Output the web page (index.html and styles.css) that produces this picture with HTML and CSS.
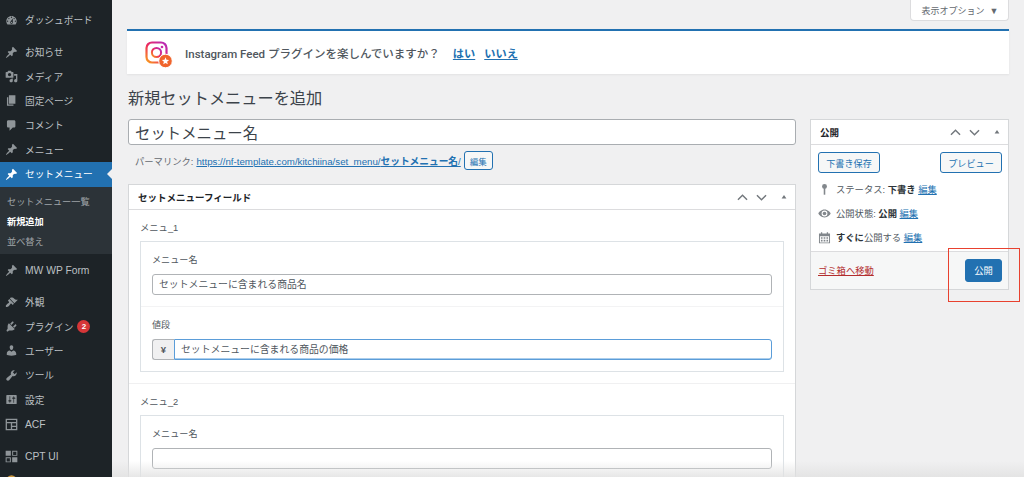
FILE: index.html
```html
<!DOCTYPE html>
<html lang="ja">
<head>
  <meta charset="UTF-8" />
  <meta name="viewport" content="width=device-width, initial-scale=1.0"/>
  <title>新規セットメニューを追加</title>
  <link rel="stylesheet" href="styles.css">
</head>
<body>
  <svg class="sprites" aria-hidden="true">
    <symbol id="i-dash" viewBox="0 0 20 20"><path d="M3.76 16h12.48c1.1-1.37 1.76-3.11 1.76-5 0-4.42-3.58-8-8-8s-8 3.58-8 8c0 1.89.66 3.63 1.76 5zM10 4c.55 0 1 .45 1 1s-.45 1-1 1-1-.45-1-1 .45-1 1-1zM6 6c.55 0 1 .45 1 1s-.45 1-1 1-1-.45-1-1 .45-1 1-1zm8 0c.55 0 1 .45 1 1s-.45 1-1 1-1-.45-1-1 .45-1 1-1zm-5.37 5.55L12 7v6c0 1.1-.9 2-2 2s-2-.9-2-2c0-.57.24-1.08.63-1.45zM4 10c.55 0 1 .45 1 1s-.45 1-1 1-1-.45-1-1 .45-1 1-1zm12 0c.55 0 1 .45 1 1s-.45 1-1 1-1-.45-1-1 .45-1 1-1zm-5 3c0-.55-.45-1-1-1s-1 .45-1 1 .45 1 1 1 1-.45 1-1z"/></symbol>
    <symbol id="i-pin" viewBox="0 0 20 20"><path d="M10.44 3.02l1.82-1.82 6.36 6.35-1.83 1.82c-1.05-.68-2.48-.57-3.41.36l-.75.75c-.92.93-1.04 2.35-.35 3.41l-1.83 1.82-2.41-2.41-2.8 2.79c-.42.42-3.38 2.71-3.8 2.29s1.86-3.39 2.28-3.81l2.79-2.79L4.1 9.36l1.83-1.82c1.05.69 2.48.57 3.4-.36l.75-.75c.93-.92 1.05-2.35.36-3.41z"/></symbol>
    <symbol id="i-media" viewBox="0 0 20 20"><path d="M13 11V4c0-.55-.45-1-1-1h-1.67L9 1H5L3.67 3H2c-.55 0-1 .45-1 1v7c0 .55.45 1 1 1h10c.55 0 1-.45 1-1zM7 4.5c1.38 0 2.5 1.12 2.5 2.5S8.38 9.5 7 9.5 4.5 8.38 4.5 7 5.62 4.5 7 4.5zM14 6h5v10.5c0 1.38-1.12 2.5-2.5 2.5S14 17.88 14 16.5s1.12-2.5 2.5-2.5c.17 0 .34.02.5.05V9h-3V6zm-4 8.05V13h2v3.5c0 1.38-1.12 2.5-2.5 2.5S7 17.88 7 16.5 8.12 14 9.5 14c.17 0 .34.02.5.05z"/></symbol>
    <symbol id="i-page" viewBox="0 0 20 20"><path d="M6 15V2h10v13H6zm-1 1h8v2H3V5h2v11z"/></symbol>
    <symbol id="i-comment" viewBox="0 0 20 20"><path d="M5 2h9c1.1 0 2 .9 2 2v7c0 1.1-.9 2-2 2h-2l-5 5v-5H5c-1.1 0-2-.9-2-2V4c0-1.1.9-2 2-2z"/></symbol>
    <symbol id="i-brush" viewBox="0 0 20 20"><path d="M14.48 11.06L7.41 3.99l1.5-1.5c.5-.56 2.3-.47 3.51.32 1.21.8 1.43 1.28 2.91 2.1 1.18.64 2.45 1.26 4.45.85zm-.71.71L6.7 4.7 4.93 6.47c-.39.39-.39 1.02 0 1.41l1.06 1.06c.39.39.39 1.03 0 1.42-.6.6-1.43 1.11-2.21 1.69-.35.26-.7.53-1.01.84C1.43 13.23.78 15.78 1.5 16.5c.73.72 3.27.07 4.61-1.27.31-.31.58-.66.84-1.01.58-.78 1.09-1.61 1.69-2.21.39-.39 1.02-.39 1.41 0l1.06 1.06c.39.39 1.02.39 1.41 0z"/></symbol>
    <symbol id="i-plugin" viewBox="0 0 20 20"><path d="M13.11 4.36L9.87 7.6 8 5.73l3.24-3.24c.35-.34 1.05-.2 1.56.32.52.51.66 1.21.31 1.55zm-8 1.77l.91-1.12 9.01 9.01-1.19.84c-.71.71-2.63 1.16-3.82 1.16H6.14L4.9 17.26c-.59.59-1.54.59-2.12 0-.59-.58-.59-1.53 0-2.12l1.24-1.24v-3.88c0-1.13.4-3.19 1.09-3.89zm7.26 3.97l3.24-3.24c.34-.35 1.04-.21 1.55.31.52.51.66 1.21.31 1.55l-3.24 3.25z"/></symbol>
    <symbol id="i-user" viewBox="0 0 20 20"><path d="M10 9.25c-2.27 0-2.73-3.44-2.73-3.44C7 4.02 7.82 2 9.97 2c2.16 0 2.98 2.02 2.71 3.81 0 0-.41 3.44-2.68 3.44zm0 2.57L12.72 10c2.39 0 4.52 2.33 4.52 4.53v2.49s-3.65 1.13-7.24 1.13c-3.65 0-7.24-1.13-7.24-1.13v-2.49c0-2.25 1.94-4.48 4.47-4.48z"/></symbol>
    <symbol id="i-tool" viewBox="0 0 20 20"><path d="M16.68 9.77c-1.34 1.34-3.3 1.67-4.95.99l-5.41 6.52c-.99.99-2.59.99-3.58 0s-.99-2.59 0-3.57l6.52-5.42c-.68-1.65-.35-3.61.99-4.95 1.28-1.28 3.12-1.62 4.72-1.06l-2.89 2.89 2.82 2.82 2.86-2.87c.53 1.58.18 3.39-1.08 4.65z"/></symbol>
    <symbol id="i-settings" viewBox="0 0 20 20"><path d="M18 16V4c0-.55-.45-1-1-1H3c-.55 0-1 .45-1 1v12c0 .55.45 1 1 1h14c.55 0 1-.45 1-1zM8 11h1c.55 0 1 .45 1 1s-.45 1-1 1H8v1.5c0 .28-.22.5-.5.5s-.5-.22-.5-.5V13H6c-.55 0-1-.45-1-1s.45-1 1-1h1V5.5c0-.28.22-.5.5-.5s.5.22.5.5V11zm5-2h-1c-.55 0-1-.45-1-1s.45-1 1-1h1V5.5c0-.28.22-.5.5-.5s.5.22.5.5V7h1c.55 0 1 .45 1 1s-.45 1-1 1h-1v5.5c0 .28-.22.5-.5.5s-.5-.22-.5-.5V9z"/></symbol>
    <symbol id="i-acf" viewBox="0 0 20 20"><path fill-rule="evenodd" d="M1 1h18v18H1zM3 3v3h14V3zM3 8v9h6V8zm8 0v4h6V8zm0 6v3h6v-3z"/></symbol>
    <symbol id="i-cpt" viewBox="0 0 20 20"><path fill-rule="evenodd" d="M1 1h8v8H1zM11 1h8v8h-8zM12.500 2.500v5h5v-5zM1 11h8v8H1zM2.500 12.500v5h5v-5zM11 11h8v8h-8z"/></symbol>
    <symbol id="i-up" viewBox="0 0 20 20"><path d="M3 13.5L10 6.5l7 7" fill="none" stroke="currentColor" stroke-width="2.2"/></symbol>
    <symbol id="i-down" viewBox="0 0 20 20"><path d="M3 6.5l7 7 7-7" fill="none" stroke="currentColor" stroke-width="2.2"/></symbol>
    <symbol id="i-tri" viewBox="0 0 20 20"><path d="M10 5l6 9H4z"/></symbol>
  </svg>

  <!-- サイドメニュー -->
  <nav class="sidebar">
    <a class="nav-item"><svg class="nav-icon"><use href="#i-dash"/></svg>ダッシュボード</a>
    <div class="nav-sep"></div>
    <a class="nav-item"><svg class="nav-icon"><use href="#i-pin"/></svg>お知らせ</a>
    <a class="nav-item"><svg class="nav-icon"><use href="#i-media"/></svg>メディア</a>
    <a class="nav-item"><svg class="nav-icon"><use href="#i-page"/></svg>固定ページ</a>
    <a class="nav-item"><svg class="nav-icon"><use href="#i-comment"/></svg>コメント</a>
    <a class="nav-item"><svg class="nav-icon"><use href="#i-pin"/></svg>メニュー</a>
    <a class="nav-item current"><svg class="nav-icon"><use href="#i-pin"/></svg>セットメニュー</a>
    <div class="submenu">
      <a>セットメニュー一覧</a>
      <a class="sub-current">新規追加</a>
      <a>並べ替え</a>
    </div>
    <a class="nav-item latin"><svg class="nav-icon"><use href="#i-pin"/></svg>MW WP Form</a>
    <div class="nav-sep"></div>
    <a class="nav-item"><svg class="nav-icon"><use href="#i-brush"/></svg>外観</a>
    <a class="nav-item"><svg class="nav-icon"><use href="#i-plugin"/></svg>プラグイン<span class="badge">2</span></a>
    <a class="nav-item"><svg class="nav-icon"><use href="#i-user"/></svg>ユーザー</a>
    <a class="nav-item"><svg class="nav-icon"><use href="#i-tool"/></svg>ツール</a>
    <a class="nav-item"><svg class="nav-icon"><use href="#i-settings"/></svg>設定</a>
    <a class="nav-item latin"><svg class="nav-icon"><use href="#i-acf"/></svg>ACF</a>
    <div class="nav-sep"></div>
    <a class="nav-item latin"><svg class="nav-icon"><use href="#i-cpt"/></svg>CPT UI</a>
    <a class="nav-item"><svg class="nav-icon plugin-dot" viewBox="0 0 20 20"><circle cx="10" cy="10" r="8"/></svg></a>
  </nav>

  <main class="content">
    <div class="screen-meta"><button class="screen-tab">表示オプション<span class="screen-arrow">▼</span></button></div>

    <div class="notice">
      <svg class="ig-logo" viewBox="0 0 28 28">
        <defs>
          <linearGradient id="ig" x1="0" y1="1" x2="1" y2="0">
            <stop offset="0" stop-color="#f9a11b"/>
            <stop offset="0.45" stop-color="#ee2a5c"/>
            <stop offset="1" stop-color="#b32ac0"/>
          </linearGradient>
        </defs>
        <rect x="1.5" y="1.5" width="20" height="20" rx="5.5" fill="none" stroke="url(#ig)" stroke-width="2.2"/>
        <circle cx="11.5" cy="11.5" r="4.6" fill="none" stroke="url(#ig)" stroke-width="2"/>
        <circle cx="17" cy="6" r="1.3" fill="#c72da6"/>
        <circle cx="20.5" cy="20" r="6.8" fill="#f0642c" stroke="#fff" stroke-width="1"/>
        <path d="M20.5 16.3l1 2.5 2.6.2-2 1.7.7 2.6-2.3-1.4-2.3 1.4.7-2.6-2-1.7 2.6-.2z" fill="#fff"/>
      </svg>
      <span class="notice-text">Instagram Feed プラグインを楽しんでいますか？</span>
      <a class="notice-link">はい</a>
      <a class="notice-link">いいえ</a>
    </div>

    <h1 class="page-title">新規セットメニューを追加</h1>

    <div class="columns">
      <div class="col-main">
        <input class="title-input" type="text" value="セットメニュー名" />
        <div class="permalink">
          <span>パーマリンク:</span>
          <a class="link">https://nf-template.com/kitchiina/set_menu/<b>セットメニュー名</b>/</a>
          <button class="btn-small">編集</button>
        </div>

        <section class="postbox fields">
          <div class="box-head">
            <h2>セットメニューフィールド</h2>
            <div class="box-controls">
              <svg class="ctl"><use href="#i-up"/></svg>
              <svg class="ctl"><use href="#i-down"/></svg>
              <svg class="ctl tri"><use href="#i-tri"/></svg>
            </div>
          </div>

          <div class="group">
            <div class="group-label">メニュ_1</div>
            <div class="group-box">
              <div class="field">
                <label>メニュー名</label>
                <input class="text-input" type="text" placeholder="セットメニューに含まれる商品名" />
              </div>
              <div class="field">
                <label>値段</label>
                <div class="input-group">
                  <span class="prepend">¥</span>
                  <input class="text-input focus" type="text" placeholder="セットメニューに含まれる商品の価格" />
                </div>
              </div>
            </div>
          </div>

          <div class="group">
            <div class="group-label">メニュ_2</div>
            <div class="group-box">
              <div class="field">
                <label>メニュー名</label>
                <input class="text-input" type="text" />
              </div>
            </div>
          </div>
        </section>
      </div>

      <aside class="col-side">
        <section class="postbox publish">
          <div class="box-head">
            <h2>公開</h2>
            <div class="box-controls">
              <svg class="ctl"><use href="#i-up"/></svg>
              <svg class="ctl"><use href="#i-down"/></svg>
              <svg class="ctl tri"><use href="#i-tri"/></svg>
            </div>
          </div>
          <div class="publish-actions">
            <button class="btn-outline">下書き保存</button>
            <button class="btn-outline">プレビュー</button>
          </div>
          <div class="pub-row">
            <svg class="pub-icon" viewBox="0 0 20 20"><circle cx="10" cy="5.5" r="3.8"/><rect x="8.8" y="8" width="2.4" height="10"/></svg>
            <span>ステータス: <b>下書き</b> <a class="link">編集</a></span>
          </div>
          <div class="pub-row">
            <svg class="pub-icon" viewBox="0 0 20 20"><path fill-rule="evenodd" d="M10 4C5 4 1.5 8 .5 10c1 2 4.500 6 9.500 6s8.500-4 9.500-6c-1-2-4.500-6-9.500-6zm0 1.500a4.500 4.500 0 110 9 4.500 4.500 0 010-9z"/><circle cx="10" cy="10" r="2.800"/></svg>
            <span>公開状態: <b>公開</b> <a class="link">編集</a></span>
          </div>
          <div class="pub-row">
            <svg class="pub-icon" viewBox="0 0 20 20"><path fill-rule="evenodd" d="M1.500 4h3V2h2v2h7V2h2v2h3v15h-17zM3 8v9.500h14V8zm1.500 1.500h2.500V12H4.500zm4.200 0h2.600V12H8.700zm4.300 0h2.500V12H13zm-8.500 4h2.500V16H4.500zm4.200 0h2.600V16H8.700zm4.300 0h2.500V16H13z"/></svg>
            <span><b>すぐに</b>公開する <a class="link">編集</a></span>
          </div>
          <div class="publish-foot">
            <a class="trash">ゴミ箱へ移動</a>
            <button class="btn-primary">公開</button>
          </div>
        </section>
      </aside>
    </div>
  </main>

  <!-- 赤枠の注釈 -->
  <div class="callout"></div>
  <div class="bottom-fade"></div>
</body>
</html>
```

FILE: styles.css
```css
* {
  box-sizing: border-box;
}

body {
  margin: 0;
  height: 477px;
  display: flex;
  overflow: hidden;
  position: relative;
  background: #f0f0f1;
  color: #3c434a;
  font-family: "Liberation Sans", "Noto Sans CJK JP", sans-serif;
  font-size: 9.5px;
}

.sprites {
  display: none;
}

/* サイドメニュー */
.sidebar {
  width: 112px;
  flex-shrink: 0;
  background: #1d2327;
  color: #bcc0c4;
  padding-top: 8px;
  overflow: hidden;
}

.nav-item {
  display: flex;
  align-items: center;
  height: 24.4px;
  padding-left: 5px;
  font-size: 9.7px;
  white-space: nowrap;
}

.nav-item.latin {
  font-size: 10.3px;
}

.nav-icon {
  width: 13px;
  height: 13px;
  margin-right: 7px;
  fill: #8f9599;
  flex-shrink: 0;
}

.nav-icon.plugin-dot {
  fill: #c9963f;
}

.nav-sep {
  height: 7.6px;
}

.nav-item.current {
  position: relative;
  background: #2271b1;
  color: #fff;
  height: 25px;
}

.nav-item.current .nav-icon {
  fill: #fff;
}

.nav-item.current::after {
  content: "";
  position: absolute;
  right: 0;
  top: 7px;
  border: 5.5px solid transparent;
  border-right-color: #f0f0f1;
  border-left: 0;
}

.submenu {
  background: #2c3338;
  height: 67px;
  padding-top: 5.5px;
  margin-bottom: 4px;
  color: #a0a5a9;
  font-size: 9.2px;
}

.submenu a {
  display: block;
  height: 20px;
  line-height: 20px;
  padding-left: 7px;
}

.submenu .sub-current {
  color: #fff;
  font-weight: bold;
}

.badge {
  display: inline-block;
  width: 13px;
  height: 13px;
  margin-left: 4px;
  border-radius: 50%;
  background: #d63638;
  color: #fff;
  font-size: 8px;
  font-weight: bold;
  line-height: 13px;
  text-align: center;
}

/* メイン */
.content {
  flex: 1;
  min-width: 0;
  padding: 0 15px 0 15px;
}

.screen-meta {
  display: flex;
  justify-content: flex-end;
  height: 29px;
}

.screen-tab {
  width: 99px;
  height: 21px;
  border: 1px solid #dcdcde;
  border-top: 0;
  border-radius: 0 0 4px 4px;
  background: #fff;
  color: #646970;
  font: inherit;
  font-size: 9px;
  padding: 0 0 0 1px;
}

.screen-arrow {
  margin-left: 5px;
  font-size: 9px;
}

.notice {
  display: flex;
  align-items: center;
  height: 45px;
  background: #fff;
  border-top: 2px solid #2271b1;
  box-shadow: 0 1px 2px rgba(0, 0, 0, 0.06);
  padding-left: 18px;
}

.ig-logo {
  width: 28px;
  height: 28px;
  margin: 4px 12px 0 0;
}

.notice-text {
  font-family: Roboto, "Noto Sans CJK JP", sans-serif;
  font-size: 11.5px;
  font-weight: 500;
  color: #50575e;
  margin-right: 13px;
}

.notice-link {
  color: #2271b1;
  font-size: 11.2px;
  font-weight: bold;
  text-decoration: underline;
  margin-right: 9px;
}

.page-title {
  margin: 0;
  height: 45px;
  padding: 13px 0 0 1px;
  font-size: 16.2px;
  font-weight: 400;
  line-height: 22px;
  color: #3c434a;
}

.columns {
  display: flex;
  gap: 14px;
  align-items: flex-start;
}

.col-main {
  width: 669px;
  padding-left: 1px;
}

.col-side {
  width: 199px;
}

.title-input {
  display: block;
  width: 100%;
  height: 26px;
  padding: 0 6px;
  border: 1px solid #a9adb1;
  border-radius: 3px;
  background: #fff;
  color: #3c434a;
  font: inherit;
  font-size: 15.4px;
}

.permalink {
  display: flex;
  align-items: center;
  gap: 3px;
  height: 19px;
  margin-top: 6px;
  padding-left: 7px;
  color: #646970;
  font-size: 9.3px;
}

.link {
  color: #2271b1;
  text-decoration: underline;
}

.permalink .link {
  font-size: 9.7px;
}

.link b {
  font-weight: bold;
}

.btn-small {
  height: 19px;
  width: 29px;
  padding: 0;
  border: 1px solid #2271b1;
  border-radius: 3px;
  background: #f6f7f7;
  color: #2271b1;
  font: inherit;
  font-size: 8.5px;
}

.postbox {
  background: #fff;
  border: 1px solid #d5d7d9;
}

.fields {
  margin-top: 14px;
}

.box-head {
  display: flex;
  justify-content: space-between;
  align-items: center;
  height: 25px;
  padding-left: 9px;
  border-bottom: 1px solid #dcdcde;
}

.box-head h2 {
  margin: 0;
  font-size: 9.5px;
  font-weight: bold;
  color: #1d2327;
}

.box-controls {
  display: flex;
  align-items: center;
  gap: 6px;
  padding-right: 7px;
  color: #72777c;
  fill: #72777c;
}

.ctl {
  width: 13px;
  height: 13px;
}

.ctl.tri {
  width: 8px;
  height: 8px;
  margin-left: 6px;
}

.group {
  padding: 11px;
  border-bottom: 1px solid #f0f0f1;
}

.group-label {
  height: 20px;
  font-size: 9.3px;
  line-height: 14px;
  color: #50575e;
}

.group-box {
  border: 1px solid #dde2e6;
}

.field {
  padding: 11px;
  border-bottom: 1px solid #f3f3f4;
}

.field:last-child {
  border-bottom: 0;
}

.field label {
  display: block;
  height: 21px;
  line-height: 15px;
  color: #50575e;
  font-size: 9.1px;
}

.text-input {
  display: block;
  width: 100%;
  height: 21px;
  padding: 0 6px;
  border: 1px solid #b0b3b6;
  border-radius: 3px;
  background: #fff;
  font: inherit;
  font-size: 9.85px;
}

.text-input::placeholder {
  color: #50575e;
  opacity: 1;
}

.input-group {
  display: flex;
}

.prepend {
  width: 22px;
  height: 21px;
  line-height: 19px;
  text-align: center;
  border: 1px solid #b0b3b6;
  border-right: 0;
  border-radius: 3px 0 0 3px;
  background: #f0f0f1;
  color: #50575e;
  font-weight: bold;
}

.text-input.focus {
  width: auto;
  flex: 1;
  border-color: #5b9dd9;
  border-radius: 0 3px 3px 0;
  box-shadow: inset 0 -0.5px 0 #5b9dd9;
}

/* 公開ボックス */
.publish-actions {
  display: flex;
  justify-content: space-between;
  padding: 7px 6px 0 7px;
  height: 32px;
}

.btn-outline {
  width: 62px;
  height: 21px;
  padding: 0;
  border: 1px solid #2271b1;
  border-radius: 3px;
  background: #f6f7f7;
  color: #2271b1;
  font: inherit;
  font-size: 9.1px;
}

.pub-row {
  display: flex;
  align-items: center;
  gap: 5px;
  height: 24.2px;
  padding-left: 7px;
  color: #50575e;
  font-size: 9.3px;
}

.pub-row b {
  color: #2c3338;
}

.pub-icon {
  width: 13px;
  height: 13px;
  fill: #82878c;
  flex-shrink: 0;
}

.publish-foot {
  display: flex;
  justify-content: space-between;
  align-items: center;
  height: 38px;
  margin-top: 1px;
  padding: 0 6px 0 7px;
  background: #f6f7f7;
  border-top: 1px solid #dcdcde;
}

.trash {
  color: #b32d2e;
  text-decoration: underline;
  font-size: 9.3px;
}

.btn-primary {
  width: 37px;
  height: 23px;
  padding: 0;
  border: 1px solid #2271b1;
  border-radius: 3px;
  background: #2271b1;
  color: #fff;
  font: inherit;
  font-size: 9.3px;
}

/* 注釈と下端の影 */
.callout {
  position: absolute;
  left: 948px;
  top: 248px;
  width: 72px;
  height: 54px;
  border: 1px solid #e8412f;
}

.bottom-fade {
  position: absolute;
  left: 112px;
  right: 0;
  bottom: 0;
  height: 16px;
  background: linear-gradient(to bottom, rgba(225, 225, 225, 0), rgba(225, 225, 225, 0.8));
}
```
